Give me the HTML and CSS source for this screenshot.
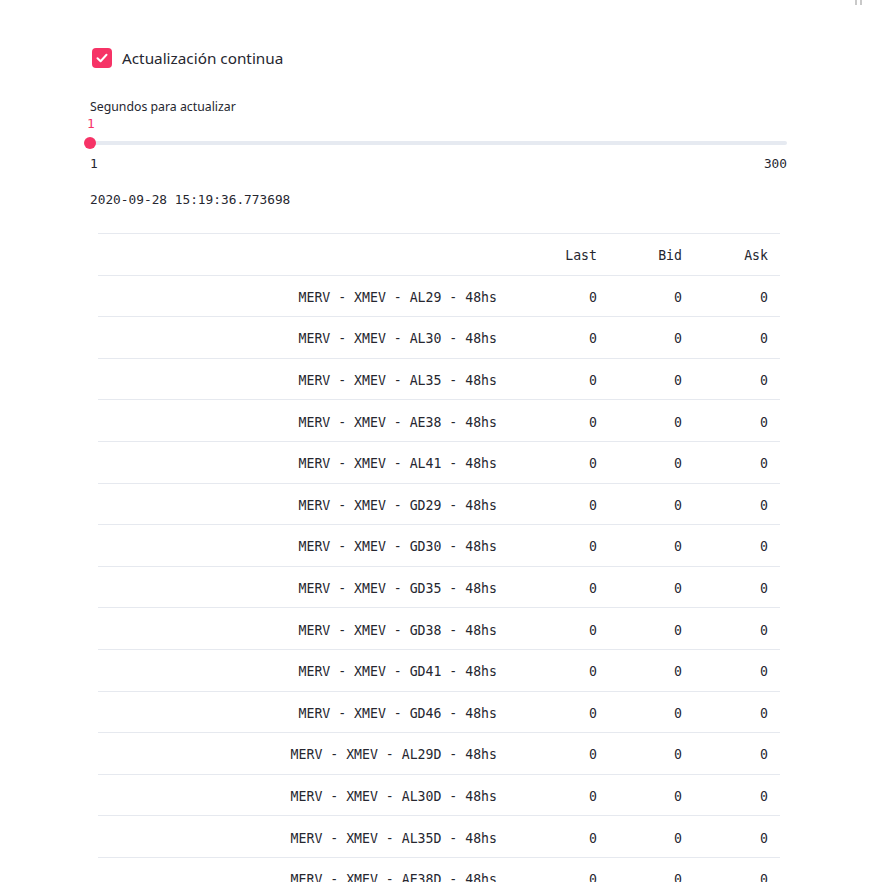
FILE: index.html
```html
<!DOCTYPE html>
<html>
<head>
<meta charset="utf-8">
<link rel="stylesheet" href="styles.css">
</head>
<body>
<div class="menu-dots"><span></span><span></span></div>
<main class="main">
  <label class="checkbox">
    <span class="box"><svg width="12" height="10" viewBox="0 0 12 10"><path d="M1.5 5.2 L4.6 8.2 L10.5 1.8" fill="none" stroke="#fff" stroke-width="2" stroke-linecap="round" stroke-linejoin="round"/></svg></span>
    <span class="check-label">Actualización continua</span>
  </label>

  <div class="slider">
    <div class="slider-label">Segundos para actualizar</div>
    <div class="slider-value">1</div>
    <div class="track"><span class="thumb"></span></div>
    <div class="ticks"><span>1</span><span>300</span></div>
  </div>

  <div class="stamp">2020-09-28 15:19:36.773698</div>

  <table class="data">
    <thead>
      <tr><th class="idx"></th><th class="c-last">Last</th><th class="c-bid">Bid</th><th class="c-ask">Ask</th></tr>
    </thead>
    <tbody>
      <tr><th class="idx">MERV - XMEV - AL29 - 48hs</th><td>0</td><td>0</td><td>0</td></tr>
      <tr><th class="idx">MERV - XMEV - AL30 - 48hs</th><td>0</td><td>0</td><td>0</td></tr>
      <tr><th class="idx">MERV - XMEV - AL35 - 48hs</th><td>0</td><td>0</td><td>0</td></tr>
      <tr><th class="idx">MERV - XMEV - AE38 - 48hs</th><td>0</td><td>0</td><td>0</td></tr>
      <tr><th class="idx">MERV - XMEV - AL41 - 48hs</th><td>0</td><td>0</td><td>0</td></tr>
      <tr><th class="idx">MERV - XMEV - GD29 - 48hs</th><td>0</td><td>0</td><td>0</td></tr>
      <tr><th class="idx">MERV - XMEV - GD30 - 48hs</th><td>0</td><td>0</td><td>0</td></tr>
      <tr><th class="idx">MERV - XMEV - GD35 - 48hs</th><td>0</td><td>0</td><td>0</td></tr>
      <tr><th class="idx">MERV - XMEV - GD38 - 48hs</th><td>0</td><td>0</td><td>0</td></tr>
      <tr><th class="idx">MERV - XMEV - GD41 - 48hs</th><td>0</td><td>0</td><td>0</td></tr>
      <tr><th class="idx">MERV - XMEV - GD46 - 48hs</th><td>0</td><td>0</td><td>0</td></tr>
      <tr><th class="idx">MERV - XMEV - AL29D - 48hs</th><td>0</td><td>0</td><td>0</td></tr>
      <tr><th class="idx">MERV - XMEV - AL30D - 48hs</th><td>0</td><td>0</td><td>0</td></tr>
      <tr><th class="idx">MERV - XMEV - AL35D - 48hs</th><td>0</td><td>0</td><td>0</td></tr>
      <tr><th class="idx">MERV - XMEV - AE38D - 48hs</th><td>0</td><td>0</td><td>0</td></tr>
      <tr><th class="idx">MERV - XMEV - AL41D - 48hs</th><td>0</td><td>0</td><td>0</td></tr>
    </tbody>
  </table>
</main>
</body>
</html>
```

FILE: styles.css
```css
html, body {
  margin: 0;
  padding: 0;
  background: #fff;
  overflow: hidden;
}
body {
  font-family: "Noto Sans", "Open Sans", sans-serif;
  color: rgb(38, 39, 48);
  position: relative;
  height: 882px;
}
.menu-dots {
  position: absolute;
  top: 0;
  left: 855px;
  display: flex;
  gap: 3px;
}
.menu-dots span {
  display: block;
  width: 2px;
  height: 5px;
  background: #c9c9c9;
}
.main {
  width: 697px;
  padding-left: 90px;
  padding-top: 48px;
}
.checkbox {
  display: flex;
  align-items: center;
  height: 20px;
  padding-left: 2px;
}
.box {
  width: 20px;
  height: 20px;
  border-radius: 4px;
  background: #f63366;
  display: flex;
  align-items: center;
  justify-content: center;
}
.check-label {
  margin-left: 10px;
  font-size: 15.3px;
  line-height: 20px;
}
.slider {
  margin-top: 30px;
}
.slider-label {
  font-size: 12.3px;
  line-height: 18px;
}
.slider-value {
  font-family: "DejaVu Sans Mono", monospace;
  font-size: 12.8px;
  line-height: 14px;
  color: #f63366;
  margin-left: -3px;
  margin-top: 1px;
}
.track {
  position: relative;
  height: 4px;
  background: #e6eaf1;
  border-radius: 2px;
  margin-top: 10px;
}
.thumb {
  position: absolute;
  left: -6px;
  top: -4px;
  width: 12px;
  height: 12px;
  border-radius: 50%;
  background: #f63366;
}
.ticks {
  display: flex;
  justify-content: space-between;
  font-family: "DejaVu Sans Mono", monospace;
  font-size: 12.8px;
  line-height: 14px;
  margin-top: 12px;
}
.stamp {
  font-family: "DejaVu Sans Mono", monospace;
  font-size: 12.8px;
  line-height: 14px;
  margin-top: 22px;
}
.data {
  margin-top: 26px;
  margin-left: 8px;
  width: 682px;
  border-collapse: collapse;
  font-family: "DejaVu Sans Mono", monospace;
  font-size: 13.2px;
  table-layout: fixed;
}
.data th, .data td {
  border-top: 1px solid #e6e9ef;
  border-bottom: 1px solid #e6e9ef;
  height: 41.6px;
  padding: 3px 12px 0;
  text-align: right;
  font-weight: normal;
  white-space: nowrap;
  box-sizing: border-box;
}
.data .idx { width: 411px; }
.data .c-last { width: 100px; }
.data .c-bid { width: 85px; }
.data .c-ask { width: 86px; }
```
